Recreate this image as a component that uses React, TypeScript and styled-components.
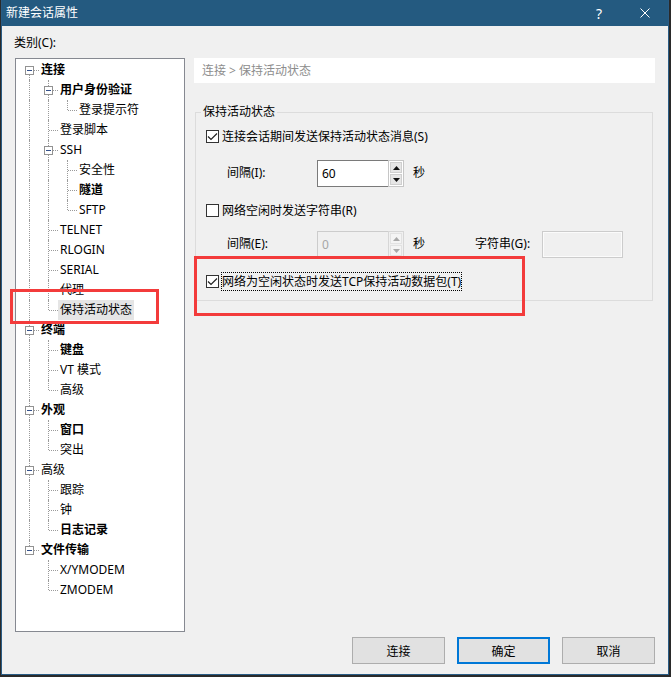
import styled, { createGlobalStyle } from "styled-components";

const GlobalStyle = createGlobalStyle`
  html, body {
    margin: 0;
    padding: 0;
    background: #2a2a2a;
  }
  body {
    font-family: "Noto Sans", "Noto Sans CJK SC", sans-serif;
    font-size: 12px;
    color: #000;
  }
`;

const Window = styled.div`
  position: relative;
  width: 668px;
  margin-left: 1px;
  box-sizing: border-box;
  background: #f0f0f0;
  border: 1px solid #2a5c85;
  border-top: none;
`;

const TitleBar = styled.div`
  display: flex;
  align-items: center;
  height: 26px;
  background: #245a80;
  color: #fff;
`;

const TitleText = styled.div`
  flex: 1;
  padding-left: 4px;
  font-size: 12px;
  line-height: 16px;
`;

const TitleButton = styled.div`
  display: flex;
  align-items: center;
  justify-content: center;
  width: 46px;
  height: 26px;
  font-size: 14px;
  color: #fff;
`;

const Content = styled.div`
  display: flex;
  flex-direction: column;
  padding: 9px 13px 10px 13px;
`;

const CategoryLabel = styled.div`
  margin-left: -1px;
  line-height: 16px;
  height: 16px;
`;

const Main = styled.div`
  display: grid;
  grid-template-columns: 170px 1fr;
  column-gap: 9px;
  margin-top: 7px;
  height: 574px;
`;

const TreeBox = styled.div`
  box-sizing: border-box;
  height: 574px;
  background: #fff;
  border: 1px solid #868991;
  padding: 1px 0 0 4px;
`;

const TreeRow = styled.div`
  display: flex;
  align-items: center;
  height: 20px;
`;

const Guide = styled.span<{ $line: boolean }>`
  position: relative;
  flex: 0 0 19px;
  height: 20px;
  &::before {
    content: "";
    display: ${(p) => (p.$line ? "block" : "none")};
    position: absolute;
    left: 9px;
    top: 0;
    bottom: 0;
    border-left: 1px dotted #9a9a9a;
  }
`;

const Connector = styled.span<{ $top: boolean; $bottom: boolean }>`
  position: relative;
  flex: 0 0 19px;
  height: 20px;
  &::before {
    content: "";
    position: absolute;
    left: 9px;
    top: ${(p) => (p.$top ? "0" : "10px")};
    bottom: ${(p) => (p.$bottom ? "0" : "10px")};
    border-left: 1px dotted #9a9a9a;
  }
  &::after {
    content: "";
    position: absolute;
    left: 10px;
    right: 0;
    top: 10px;
    border-top: 1px dotted #9a9a9a;
  }
`;

const Expander = styled.span`
  position: absolute;
  z-index: 1;
  left: 5px;
  top: 6px;
  width: 9px;
  height: 9px;
  box-sizing: border-box;
  background: #fff;
  border: 1px solid #929292;
  &::after {
    content: "";
    position: absolute;
    left: 1px;
    top: 3px;
    width: 5px;
    height: 1px;
    background: #33508a;
  }
`;

const NodeLabel = styled.span<{ $bold?: boolean; $selected?: boolean }>`
  padding: 0 2px;
  height: 20px;
  line-height: 20px;
  white-space: nowrap;
  font-weight: ${(p) => (p.$bold ? 700 : 400)};
  background: ${(p) => (p.$selected ? "#e5e5e5" : "transparent")};
`;

const RightPanel = styled.div`
  display: flex;
  flex-direction: column;
`;

const Breadcrumb = styled.div`
  height: 25px;
  background: #fff;
  color: #8d8d8d;
  line-height: 25px;
  padding-left: 8px;
`;

const Group = styled.fieldset`
  margin: 21px 2px 0 1px;
  padding: 0 0 9px 0;
  min-width: 0;
  border: 1px solid #dcdcdc;
`;

const Legend = styled.legend`
  margin-left: 5px;
  padding: 0 2px;
  line-height: 16px;
`;

const GroupInner = styled.div`
  display: flex;
  flex-direction: column;
  padding-left: 10px;
`;

const CheckRow = styled.div<{ $gap: number }>`
  display: flex;
  align-items: center;
  margin-top: ${(p) => p.$gap}px;
`;

const Box = styled.span`
  display: flex;
  align-items: center;
  justify-content: center;
  width: 13px;
  height: 13px;
  box-sizing: border-box;
  border: 1px solid #333;
  background: #fff;
`;

const CheckText = styled.span<{ $focused?: boolean }>`
  margin-left: 2px;
  line-height: 17px;
  border: 1px dotted ${(p) => (p.$focused ? "#000" : "transparent")};
  white-space: nowrap;
`;

const FieldRow = styled.div<{ $gap: number }>`
  display: flex;
  align-items: center;
  margin-top: ${(p) => p.$gap}px;
  margin-left: 21px;
`;

const FieldLabel = styled.span<{ $width: number; $disabled?: boolean }>`
  width: ${(p) => p.$width}px;
  margin-top: -3px;
  white-space: nowrap;
`;

const Spin = styled.div`
  display: flex;
  width: 87px;
  height: 27px;
`;

const SpinEdit = styled.div<{ $disabled?: boolean }>`
  flex: 1;
  display: flex;
  align-items: center;
  padding-left: 4px;
  box-sizing: border-box;
  border: 1px solid ${(p) => (p.$disabled ? "#cccccc" : "#7a7a7a")};
  border-right: none;
  background: ${(p) => (p.$disabled ? "#f0f0f0" : "#fff")};
  color: ${(p) => (p.$disabled ? "#a6a6a6" : "#000")};
`;

const SpinButtons = styled.div<{ $disabled?: boolean }>`
  display: flex;
  flex-direction: column;
  width: 16px;
  box-sizing: border-box;
  border: 1px solid ${(p) => (p.$disabled ? "#d6d6d6" : "#c6c6c6")};
  background: ${(p) => (p.$disabled ? "#f0f0f0" : "#fff")};
  padding: 1px;
  gap: 1px;
`;

const SpinButton = styled.div<{ $disabled?: boolean }>`
  flex: 1;
  display: flex;
  align-items: center;
  justify-content: center;
  box-sizing: border-box;
  border: 1px solid ${(p) => (p.$disabled ? "#e2e2e2" : "#cfcfcf")};
  background: ${(p) => (p.$disabled ? "#f4f4f4" : "#e6e6e6")};
`;

const Unit = styled.span`
  margin-left: 9px;
  margin-top: -3px;
`;

const StringLabel = styled.span`
  margin-left: 50px;
  width: 67px;
  margin-top: -3px;
  white-space: nowrap;
`;

const StringBox = styled.div`
  width: 81px;
  height: 27px;
  box-sizing: border-box;
  border: 1px solid #cccccc;
  background: #f0f0f0;
  box-shadow: inset 0 0 0 1px #fbfbfb;
`;

const ButtonRow = styled.div`
  display: flex;
  justify-content: flex-end;
  gap: 12px;
  margin-top: 5px;
`;

const DialogButton = styled.div<{ $default?: boolean }>`
  display: flex;
  align-items: center;
  justify-content: center;
  width: 93px;
  height: 27px;
  box-sizing: border-box;
  background: #e1e1e1;
  border: ${(p) => (p.$default ? "2px solid #0078d7" : "1px solid #adadad")};
`;

const Annotation = styled.div<{ $x: number; $y: number; $w: number; $h: number }>`
  position: absolute;
  left: ${(p) => p.$x}px;
  top: ${(p) => p.$y}px;
  width: ${(p) => p.$w}px;
  height: ${(p) => p.$h}px;
  box-sizing: border-box;
  border: 3px solid #f33b3b;
  pointer-events: none;
`;

type TreeNode = {
  label: string;
  bold?: boolean;
  selected?: boolean;
  children?: TreeNode[];
};

const tree: TreeNode[] = [
  {
    label: "连接",
    bold: true,
    children: [
      { label: "用户身份验证", bold: true, children: [{ label: "登录提示符" }] },
      { label: "登录脚本" },
      {
        label: "SSH",
        children: [{ label: "安全性" }, { label: "隧道", bold: true }, { label: "SFTP" }],
      },
      { label: "TELNET" },
      { label: "RLOGIN" },
      { label: "SERIAL" },
      { label: "代理" },
      { label: "保持活动状态", selected: true },
    ],
  },
  {
    label: "终端",
    bold: true,
    children: [{ label: "键盘", bold: true }, { label: "VT 模式" }, { label: "高级" }],
  },
  {
    label: "外观",
    bold: true,
    children: [{ label: "窗口", bold: true }, { label: "突出" }],
  },
  {
    label: "高级",
    children: [{ label: "跟踪" }, { label: "钟" }, { label: "日志记录", bold: true }],
  },
  {
    label: "文件传输",
    bold: true,
    children: [{ label: "X/YMODEM" }, { label: "ZMODEM" }],
  },
];

type FlatRow = {
  node: TreeNode;
  depth: number;
  guides: boolean[];
  top: boolean;
  hasNext: boolean;
};

function flatten(nodes: TreeNode[], depth: number, guides: boolean[], out: FlatRow[]) {
  nodes.forEach((node, i) => {
    const hasNext = i < nodes.length - 1;
    out.push({ node, depth, guides, top: !(depth === 0 && i === 0), hasNext });
    if (node.children) flatten(node.children, depth + 1, [...guides, hasNext], out);
  });
  return out;
}

function CheckMark() {
  return (
    <svg width="11" height="11" viewBox="0 0 11 11">
      <polyline points="1,5.5 4,8.5 10,2.5" fill="none" stroke="#222" strokeWidth="1.2" />
    </svg>
  );
}

function Arrow({ up, color }: { up?: boolean; color: string }) {
  return (
    <svg width="7" height="4" viewBox="0 0 7 4">
      <polygon points={up ? "0,4 3.5,0 7,4" : "0,0 3.5,4 7,0"} fill={color} />
    </svg>
  );
}

function SpinControl({ value, disabled }: { value: string; disabled?: boolean }) {
  const arrow = disabled ? "#a8a8a8" : "#111";
  return (
    <Spin>
      <SpinEdit $disabled={disabled}>{value}</SpinEdit>
      <SpinButtons $disabled={disabled}>
        <SpinButton $disabled={disabled}>
          <Arrow up color={arrow} />
        </SpinButton>
        <SpinButton $disabled={disabled}>
          <Arrow color={arrow} />
        </SpinButton>
      </SpinButtons>
    </Spin>
  );
}

function CategoryTree() {
  const rows = flatten(tree, 0, [], []);
  return (
    <TreeBox>
      {rows.map((r, i) => (
        <TreeRow key={i}>
          {r.guides.map((g, k) => (
            <Guide key={k} $line={g} />
          ))}
          <Connector $top={r.top} $bottom={r.hasNext}>
            {r.node.children && <Expander />}
          </Connector>
          <NodeLabel $bold={r.node.bold} $selected={r.node.selected}>
            {r.node.label}
          </NodeLabel>
        </TreeRow>
      ))}
    </TreeBox>
  );
}

export default function App() {
  return (
    <>
      <GlobalStyle />
      <Window>
        <TitleBar>
          <TitleText>新建会话属性</TitleText>
          <TitleButton>?</TitleButton>
          <TitleButton>
            <svg width="10" height="10" viewBox="0 0 10 10">
              <path d="M0.5 0.5 L9.5 9.5 M9.5 0.5 L0.5 9.5" stroke="#fff" strokeWidth="1" />
            </svg>
          </TitleButton>
        </TitleBar>
        <Content>
          <CategoryLabel>类别(C):</CategoryLabel>
          <Main>
            <CategoryTree />
            <RightPanel>
              <Breadcrumb>连接 &gt; 保持活动状态</Breadcrumb>
              <Group>
                <Legend>保持活动状态</Legend>
                <GroupInner>
                  <CheckRow $gap={7}>
                    <Box>
                      <CheckMark />
                    </Box>
                    <CheckText>连接会话期间发送保持活动状态消息(S)</CheckText>
                  </CheckRow>
                  <FieldRow $gap={14}>
                    <FieldLabel $width={90}>间隔(I):</FieldLabel>
                    <SpinControl value="60" />
                    <Unit>秒</Unit>
                  </FieldRow>
                  <CheckRow $gap={14}>
                    <Box />
                    <CheckText>网络空闲时发送字符串(R)</CheckText>
                  </CheckRow>
                  <FieldRow $gap={11}>
                    <FieldLabel $width={90}>间隔(E):</FieldLabel>
                    <SpinControl value="0" disabled />
                    <Unit>秒</Unit>
                    <StringLabel>字符串(G):</StringLabel>
                    <StringBox />
                  </FieldRow>
                  <CheckRow $gap={14}>
                    <Box>
                      <CheckMark />
                    </Box>
                    <CheckText $focused>网络为空闲状态时发送TCP保持活动数据包(T)</CheckText>
                  </CheckRow>
                </GroupInner>
              </Group>
            </RightPanel>
          </Main>
          <ButtonRow>
            <DialogButton>连接</DialogButton>
            <DialogButton $default>确定</DialogButton>
            <DialogButton>取消</DialogButton>
          </ButtonRow>
        </Content>
        <Annotation $x={8} $y={289} $w={149} $h={35} />
        <Annotation $x={192} $y={256} $w={331} $h={60} />
      </Window>
    </>
  );
}
